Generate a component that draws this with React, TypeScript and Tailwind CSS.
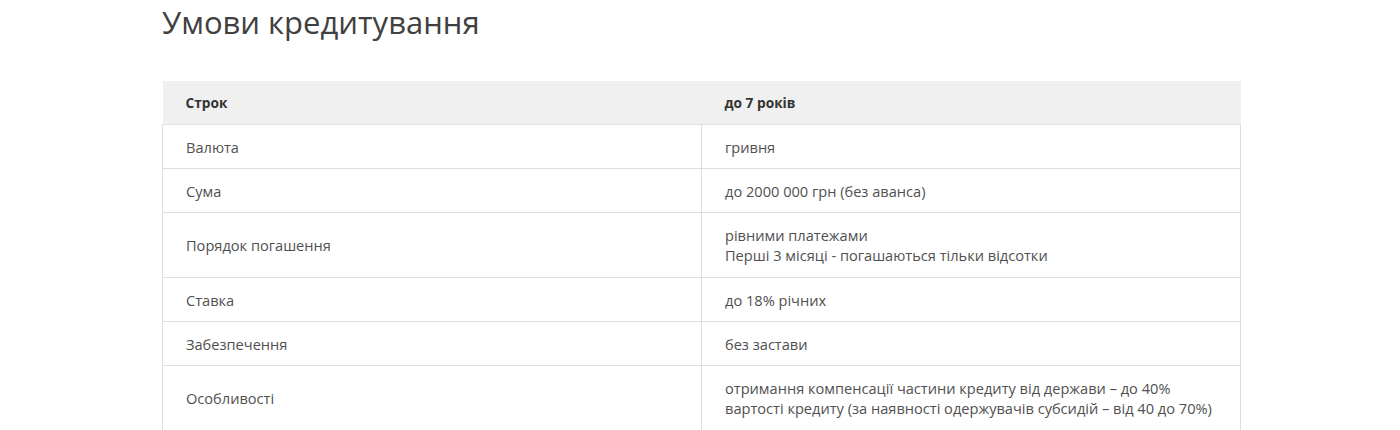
const rows: { label: string; value: string[] }[] = [
  { label: "Валюта", value: ["гривня"] },
  { label: "Сума", value: ["до 2000 000 грн (без аванса)"] },
  {
    label: "Порядок погашення",
    value: ["рівними платежами", "Перші 3 місяці - погашаються тільки відсотки"],
  },
  { label: "Ставка", value: ["до 18% річних"] },
  { label: "Забезпечення", value: ["без застави"] },
  {
    label: "Особливості",
    value: [
      "отримання компенсації частини кредиту від держави – до 40%",
      "вартості кредиту (за наявності одержувачів субсидій – від 40 до 70%)",
    ],
  },
];

export default function App() {
  return (
    <div className="min-h-[430px] bg-white font-['Open_Sans',sans-serif] text-[#505050]">
      <div className="ml-[162px] w-[1079px]">
        <h1 className="text-[31px] leading-[44px] font-normal text-[#404040]">
          Умови кредитування
        </h1>

        <table className="mt-[37px] w-full border-collapse text-[14.6px] leading-5">
          <thead>
            <tr className="border-b border-[#e2e2e2] bg-[#f0f0f0]">
              <th className="w-[539px] pr-6 pl-[23px] pt-3 pb-[11px] text-left text-[13.7px] font-bold text-[#333]">
                Строк
              </th>
              <th className="pr-6 pl-[23px] pt-3 pb-[11px] text-left text-[13.7px] font-bold text-[#333]">
                до 7 років
              </th>
            </tr>
          </thead>
          <tbody>
            {rows.map((r) => {
              // two-line rows sit a pixel taller in the original
              const pad = r.value.length > 1 ? "pt-3 pb-3" : "pt-3 pb-[11px]";
              return (
                <tr key={r.label} className="border-b border-[#dedede]">
                  <td className={`border-x border-[#dedede] pr-6 pl-[23px] align-middle ${pad}`}>
                    {r.label}
                  </td>
                  <td className={`border-x border-[#dedede] pr-6 pl-[23px] align-middle ${pad}`}>
                    {r.value.map((v) => (
                      <div key={v}>{v}</div>
                    ))}
                  </td>
                </tr>
              );
            })}
          </tbody>
        </table>
      </div>
    </div>
  );
}
